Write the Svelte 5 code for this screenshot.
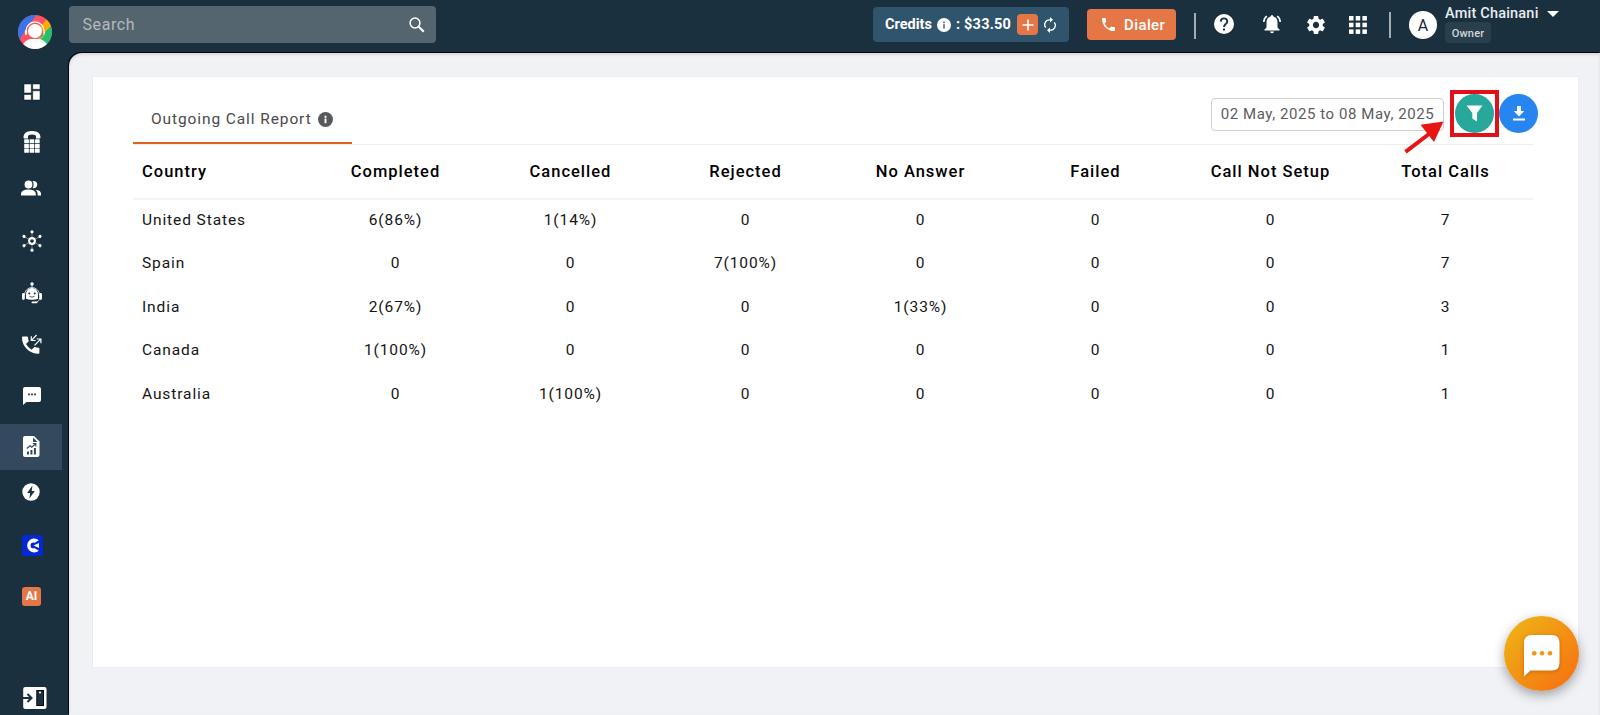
<script>
  const columns = ['Country', 'Completed', 'Cancelled', 'Rejected', 'No Answer', 'Failed', 'Call Not Setup', 'Total Calls'];
  const rows = [
    ['United States', '6(86%)', '1(14%)', '0', '0', '0', '0', '7'],
    ['Spain', '0', '0', '7(100%)', '0', '0', '0', '7'],
    ['India', '2(67%)', '0', '0', '1(33%)', '0', '0', '3'],
    ['Canada', '1(100%)', '0', '0', '0', '0', '0', '1'],
    ['Australia', '0', '1(100%)', '0', '0', '0', '0', '1']
  ];
  const spokes = [0, 60, 120, 180, 240, 300];
  const cells = [0, 1, 2];
</script>

{#snippet info(size, dark)}
  <svg width={size} height={size} viewBox="0 0 16 16">
    <circle cx="8" cy="8" r="8" fill={dark ? '#58595b' : '#fff'} />
    <path d="M7 7h2v5H7zM7 4h2v2H7z" fill={dark ? '#fff' : '#5b7687'} />
  </svg>
{/snippet}

<div class="app">
  <aside>
    <svg class="logo" width="34" height="34" viewBox="0 0 34 34">
      <defs><clipPath id="disc"><circle cx="17" cy="17" r="17" /></clipPath></defs>
      <g clip-path="url(#disc)">
        <rect width="34" height="34" fill="#ff5263" />
        <path d="M0 0H18L1 25H0z" fill="#3b73e8" />
        <path d="M22 12 30 3 34 10 27 19z" fill="#ffaa08" />
        <path d="M34 10V34H23L20 24z" fill="#26bf70" />
        <path d="M5 29.500Q8 24 14 24H20Q26 24 29 29.500L24 34H10z" fill="#fff" />
      </g>
      <circle cx="17" cy="16" r="7" fill="#fff" />
      <path d="M8 19.500V16a9 9 0 0 1 18 0v3.500" fill="none" stroke="#fff" stroke-width="1.300" />
      <path d="M8 15.500v4" stroke="#fff" stroke-width="2.200" />
      <path d="M26 18.500q0 5-6 5" fill="none" stroke="#ffb83a" />
    </svg>

    <nav>
      <span class="item">
        <svg width="18" height="18" viewBox="0 0 18 18"><path d="M1 1h7.300v9H1zM9.700 1H17v5.300H9.700zM1 11.500h7.300V17H1zM9.700 7.800H17V17H9.700z" fill="#fff" stroke="#0b171e" stroke-width=".5" /></svg>
      </span>
      <span class="item">
        <svg width="18" height="22" viewBox="0 0 18 22" fill="#fff">
          <path d="M.5 6.500C.5 2 4 0 9 0s8.500 2 8.500 6.500q0 1-1 1h-3.500V5.500Q13 3.500 9 3.500T5 5.500v2H1.500q-1 0-1-1z" />
          {#each cells as r}{#each cells as c}<rect x={1.2 + c * 5.400} y={8.200 + r * 4.700} width="4.700" height="4.100" rx=".5" />{/each}{/each}
        </svg>
      </span>
      <span class="item">
        <svg width="20" height="16" viewBox="0 0 20 16" fill="#fff">
          <circle cx="7.500" cy="4.500" r="3.900" />
          <path d="M0 15.500v-1.800q0-4 7.500-4.200 7.300.2 7.300 4.200v1.800zM11.600 8.100q2-3.600 0-7.200Q16.200.6 16.300 4.500q-.2 4-4.700 3.600zM14.500 9.800q5.500.6 5.500 4v1.700h-3.400v-1.800q0-2.400-2.100-3.900z" />
        </svg>
      </span>
      <span class="item">
        <svg width="22" height="22" viewBox="-11 -11 22 22">
          <circle r="2.900" fill="none" stroke="#fff" stroke-width="2.200" />
          {#each spokes as angle}
            <g transform={`rotate(${angle})`}><path d="M0-4V-9" stroke="#8b9aa2" stroke-width=".8" /><circle cy="-9.200" r="1.600" fill="#fff" /></g>
          {/each}
        </svg>
      </span>
      <span class="item">
        <svg width="20" height="22" viewBox="0 0 20 22">
          <path d="M10 2v5M2.500 13a7.500 7.500 0 0 1 15 0M17.500 16q0 4-5 4.500" fill="none" stroke="#cbd2d6" stroke-width="1" />
          <circle cx="10" cy="2" r="1.700" fill="#fff" />
          <path d="M4 12.500Q4.500 6 10 6t6 6.500v4.200q-2 1-6 1t-6-1z" fill="#fff" />
          <rect x="0" y="11" width="2.800" height="7" rx="1.400" fill="#fff" /><rect x="17.200" y="11" width="2.800" height="7" rx="1.400" fill="#fff" />
          <rect x="9.500" y="19.600" width="6" height="1.600" rx=".8" fill="#fff" />
          <circle cx="7.300" cy="11.500" r="1" fill="#1a303e" /><circle cx="12.700" cy="11.500" r="1" fill="#1a303e" />
          <path d="M7.500 14.400q2.500 1.500 5 0" fill="none" stroke="#1a303e" stroke-width=".8" />
        </svg>
      </span>
      <span class="item">
        <svg width="20" height="20" viewBox="0 0 20 20">
          <path d="M.8 2.500H5q.9 0 1 1 .1 1.700.6 3.100.2.700-.3 1.200L4 10.100q2 3.700 5.600 5.600l2.300-2.300q.5-.5 1.200-.3 1.500.5 3.300.6 1 .1 1 1v4.100q0 1-1 1Q9.600 19.800 4.800 15 0 10.200 0 3.500q0-1 .8-1z" fill="#fff" />
          <path d="M14.600 1 9.500 6.300M9.300 2.300v4.200h4.300M12.500 11.300l6.200-6.200M14.600 5h4.300v4.300" fill="none" stroke="#fff" stroke-width="1.200" />
        </svg>
      </span>
      <span class="item">
        <svg width="18" height="18" viewBox="0 0 18 18"><path d="M2 0h14q2 0 2 2v11q0 2-2 2H3.500L0 18V2q0-2 2-2z" fill="#fff" /><path d="M5 6.500h2v1.800H5zM8 6.500h2v1.800H8zM11 6.500h2v1.800h-2z" fill="#3b4f5a" /></svg>
      </span>
      <span class="item active">
        <svg width="17" height="21" viewBox="0 0 17 21">
          <path d="M2 0h9l5.500 5.500V19q0 2-2 2H2q-2 0-2-2V2Q0 0 2 0z" fill="#fff" />
          <path d="M10 1.500V6h4.500z" fill="#34495e" />
          <path d="M4 15.500h2V18.500H4zM7.400 14h2v4.500H7.400zM10.900 12h2v6.500h-2z" fill="#34495e" />
          <path d="M3.800 12.500 7 9.700l1.700 1.600 3.900-3.600M9.800 7.500h3v3" fill="none" stroke="#34495e" stroke-width="1.200" />
        </svg>
      </span>
      <span class="item">
        <svg width="18" height="18" viewBox="0 0 18 18"><circle cx="9" cy="9" r="8.700" fill="#fff" /><path d="M10.400 2.500 5.200 10h3l-.8 5.500L12.800 8H9.700z" fill="#1a303e" /></svg>
      </span>
      <span class="item">
        <svg width="21" height="21" viewBox="0 0 21 21"><rect width="21" height="21" rx="2" fill="#0527d4" /><path d="M16.800 5.300A7 7 0 1 0 16.800 15.700L12.800 13.200Q8.500 14 8.500 10.500T12.800 7.700z" fill="#fff" /><path d="m11.500 10.500 5.500-2.400v4.800z" fill="#fff" /></svg>
      </span>
      <span class="item"><b class="ai">AI</b></span>
    </nav>

    <svg class="exit" width="24" height="22" viewBox="0 0 24 22">
      <rect x=".2" width="23.300" height="22" rx="2" fill="#fff" />
      <path d="M0 11h7M4.500 7 8.500 11l-4 4" fill="none" stroke="#1a303e" stroke-width="2" />
      <rect x="13.800" y="3.500" width="6.700" height="15" fill="#1a303e" stroke="#06090b" /><circle cx="17" cy="5.500" r="1.100" fill="#fff" />
    </svg>
  </aside>

  <div class="main">
    <header>
      <div class="search">
        <span>Search</span>
        <svg width="16" height="16" viewBox="0 0 16 16" fill="none" stroke="#fff"><circle cx="6" cy="6" r="4.900" stroke-width="1.500" /><path d="m9.500 9.500 5.300 5.300" stroke-width="2" /></svg>
      </div>
      <div class="credits">
        <span class="word">Credits</span>
        {@render info(14, false)}
        <span class="amount">: $33.50</span>
        <span class="plus"><svg width="12" height="12" viewBox="0 0 12 12"><path d="M6 .5v11M.5 6h11" stroke="#fff" stroke-width="1.600" /></svg></span>
        <svg class="refresh" width="14" height="16" viewBox="0 0 14 16"><path d="M8 2.800H6.500A4.900 4.900 0 0 0 2.700 10.700M6 13.200h1.500a4.900 4.900 0 0 0 3.800-7.900" fill="none" stroke="#fff" stroke-width="1.300" /><path d="m7 0 3 2.800L7 5.500zM7 10.500l-3 2.700L7 16z" fill="#fff" /></svg>
      </div>
      <div class="dialer">
        <svg width="13" height="13" viewBox="0 0 18 18"><path d="M1 0h3.200q1 0 1 1 0 1.900.6 3.600.2.600-.3 1.100L3.600 7.800q2.200 4.400 6.600 6.600l2.200-2.200q.4-.4 1-.2 1.700.6 3.600.6 1 0 1 1V17q0 1-1 1Q10 18 5 13T0 1q0-1 1-1z" fill="#fff" /></svg>
        <span>Dialer</span>
      </div>
      <i class="bar first"></i>
      <svg class="help" width="20" height="20" viewBox="0 0 20 20"><circle cx="10" cy="10" r="10" fill="#fff" /><path d="M6.800 7.600Q6.900 4.400 10 4.400t3.200 3q0 1.500-1.500 2.700Q10 11.300 10 13" fill="none" stroke="#1a303e" stroke-width="1.900" /><rect x="9" y="14.500" width="2" height="2" fill="#1a303e" /></svg>
      <svg class="bell" width="20" height="20" viewBox="0 0 20 20"><path d="M10 1q1.300 0 1.300 1.600Q15.500 3.800 15.500 8.500v5l2 2v1H2.500v-1l2-2v-5q0-4.700 4.200-5.900Q8.700 1 10 1zM8 17.400h4q-.2 1.800-2 1.800t-2-1.800z" fill="#fff" /><path d="M1.800 8q0-3.500 3-5.800M18.200 8q0-3.500-3-5.800" fill="none" stroke="#fff" stroke-width="1.500" /></svg>
      <svg class="gear" width="18" height="18" viewBox="2 2 20 20"><path fill="#fff" d="M19.430 12.980c.04-.32.070-.64.070-.98s-.03-.66-.070-.98l2.110-1.650c.19-.15.240-.42.120-.64l-2-3.460c-.12-.22-.39-.3-.61-.22l-2.490 1c-.52-.4-1.080-.73-1.690-.98l-.38-2.650C14.460 2.180 14.250 2 14 2h-4c-.25 0-.46.180-.49.420l-.38 2.650c-.61.250-1.170.590-1.690.980l-2.490-1c-.23-.09-.49 0-.61.220l-2 3.460c-.13.220-.07.490.12.640l2.110 1.650c-.04.320-.07.650-.07.980s.03.660.07.980l-2.110 1.650c-.19.150-.24.420-.12.640l2 3.460c.12.220.39.300.61.220l2.490-1c.52.400 1.080.730 1.690.980l.38 2.650c.03.240.24.420.49.420h4c.25 0 .46-.18.490-.42l.38-2.650c.61-.25 1.170-.59 1.690-.98l2.490 1c.23.090.49 0 .61-.22l2-3.460c.12-.22.070-.49-.12-.64l-2.110-1.650zM12 15.500c-1.930 0-3.500-1.570-3.500-3.500s1.570-3.500 3.500-3.500 3.500 1.570 3.500 3.500-1.570 3.500-3.500 3.500z" /></svg>
      <svg class="grid" width="18" height="18" viewBox="0 0 18 18" fill="#fff">{#each cells as r}{#each cells as c}<rect x={c * 6.700} y={r * 6.700} width="4.500" height="4.500" />{/each}{/each}</svg>
      <i class="bar second"></i>
      <span class="avatar">A</span>
      <div class="user">
        <div class="name"><span>Amit Chainani</span><svg width="12" height="6" viewBox="0 0 12 6"><path d="M0 0h12L6 6z" fill="#fff" /></svg></div>
        <span class="role">Owner</span>
      </div>
    </header>

    <main>
      <section class="card">
        <div class="toolbar">
          <div class="tab"><span>Outgoing Call Report</span>{@render info(15, true)}</div>
          <div class="tools">
            <span class="dates">02 May, 2025 to 08 May, 2025</span>
            <span class="round green">
              <svg width="17" height="17" viewBox="0 0 17 17"><path d="M.5.500h16L11 8v7.500q0 1-.8.600L6.300 13.500V8z" fill="#fff" /></svg>
              <i class="frame"></i>
              <svg class="arrow" width="42" height="34" viewBox="0 0 42 34"><path d="M2.500 30.800 26 13" stroke="#e81515" stroke-width="4" /><path d="M40.500.5 31 21 17.500 3.700z" fill="#e81515" /></svg>
            </span>
            <span class="round blue"><svg width="12" height="15" viewBox="0 0 12 15" fill="#fff"><path d="M4 0h4v5h3.300L6 10.500.7 5H4zM0 12.600h12v1.900H0z" /></svg></span>
          </div>
        </div>
        <div class="table">
          <div class="row head">{#each columns as c}<span>{c}</span>{/each}</div>
          {#each rows as row}
            <div class="row">{#each row as cell}<span>{cell}</span>{/each}</div>
          {/each}
        </div>
      </section>
    </main>
  </div>

  <div class="chat">
    <svg width="36" height="42" viewBox="0 0 36 42"><path d="M8 0h20q7.500 0 7.500 7.500v20q0 8-7.500 8H6.500L0 41.500V8Q0 0 8 0z" fill="#fff" /><g fill="#f4940f"><circle cx="10.200" cy="18.300" r="2.300" /><circle cx="18" cy="18.300" r="2.300" /><circle cx="26" cy="18.300" r="2.300" /></g></svg>
  </div>
</div>

<style>
  :global(body) { margin: 0; background: #1a303e; }
  * { box-sizing: border-box; }
  svg { display: block; flex: none; }
  .app { display: flex; height: 715px; width: 1600px; overflow: hidden; background: #1a303e; font-family: Roboto, sans-serif; position: relative; }
  aside { width: 69px; flex: none; display: flex; flex-direction: column; }
  .logo { margin: 14.700px 0 0 17.700px; }
  nav { display: flex; flex-direction: column; width: 62px; margin-top: 21px; }
  .item { height: 44px; flex: none; display: flex; align-items: center; justify-content: center; padding-left: 1px; }
  .item:nth-child(2) { margin-top: 6px; }
  .item:nth-child(3) { margin-top: 2px; padding-left: 0; }
  .item:nth-child(4) { margin-top: 9px; padding-left: 2px; }
  .item:nth-child(5) { margin-top: 8px; padding-left: 2px; }
  .item:nth-child(6) { margin-top: 7px; padding-left: 2px; }
  .item:nth-child(7) { margin-top: 8px; padding-left: 2px; }
  .item.active { margin-top: 6px; height: 46px; background: #34495e; padding: 0 0 1px; }
  .item:nth-child(9) { padding-left: 0; }
  .item:nth-child(10) { margin-top: 10px; padding-left: 3px; }
  .item:nth-child(11) { margin-top: 7px; }
  .ai { width: 19px; height: 19px; border-radius: 3px; background: #e57747; color: #fff; font-size: 12px; font-weight: 700; line-height: 19px; text-align: center; }
  .exit { margin: auto 0 6px 23px; }

  .main { flex: 1; display: flex; flex-direction: column; min-width: 0; }
  header { height: 53px; display: flex; align-items: flex-start; color: #fff; }
  .search { width: 367px; height: 37px; margin-top: 5.700px; padding: 0 11px 0 13.500px; border-radius: 4px; background: #55656f; display: flex; align-items: center; justify-content: space-between; font-size: 16px; letter-spacing: .6px; color: #b4b9bd; }
  .search svg { margin-top: 1px; }
  .credits { margin: 7px 0 0 437px; width: 196px; height: 35px; border-radius: 4px; background: #2f546b; display: flex; align-items: center; padding-left: 12px; font-size: 14.500px; font-weight: 700; }
  .word { width: 52px; white-space: nowrap; }
  .amount { width: 62px; margin-left: 5px; white-space: nowrap; letter-spacing: .2px; }
  .plus { width: 21px; height: 21px; margin-left: -1px; border-radius: 4px; background: #e57747; display: grid; place-items: center; }
  .refresh { margin-left: 5px; }
  .dialer { margin: 9px 0 0 18px; width: 89px; height: 31px; border-radius: 4px; background: #e57747; display: flex; align-items: center; gap: 9px; padding-left: 15px; font-size: 15px; font-weight: 500; letter-spacing: .4px; }
  .bar { width: 2px; height: 26px; background: #a5adb2; }
  .bar.first { margin: 13px 0 0 18px; }
  .bar.second { margin: 12px 0 0 22px; }
  .help { margin: 14px 0 0 18px; }
  .bell { margin: 14px 0 0 28px; }
  .gear { margin: 15.500px 0 0 25px; }
  .grid { margin: 16px 0 0 24px; }
  .avatar { margin: 10.500px 0 0 18px; width: 28px; height: 28px; border-radius: 50%; background: #fff; color: #1c2733; text-align: center; font-size: 16px; line-height: 29px; }
  .user { margin: 5px 0 0 8px; }
  .name { display: flex; align-items: center; gap: 8px; height: 17px; font-size: 14.500px; letter-spacing: .2px; font-weight: 500; color: #e9ecee; white-space: nowrap; }
  .role { display: block; width: 46px; height: 21px; border-radius: 4px; background: #293f4c; text-align: center; font-size: 11px; font-weight: 500; line-height: 23px; letter-spacing: .2px; color: #d3d8db; }

  main { flex: 1; background: #f0f2f6; border-radius: 13px 0 0 0; padding: 23px 21px 47px 23px; display: flex; box-shadow: -1px -1px 0 #02050f, inset 0 2px 3px rgba(0, 0, 0, .1); }
  .card { flex: 1; background: #fff; border: 1px solid #ebedf0; padding: 0 45px 0 40px; }
  .toolbar { display: flex; justify-content: space-between; height: 68px; border-bottom: 1px solid #ececee; }
  .tab { width: 219px; height: 67px; border-bottom: 2px solid #e0621c; display: flex; align-items: center; gap: 6px; padding: 18px 0 0 18px; font-size: 15.500px; letter-spacing: .9px; color: #4a4a4a; white-space: nowrap; }
  .tab svg { margin-top: 1px; }
  .tools { display: flex; margin: 17px -5px 0 0; }
  .dates { width: 233px; height: 33px; margin: 4px 11px 0 0; border: 1px solid #d0d0d0; border-radius: 4px; line-height: 31px; text-align: center; font-size: 15px; letter-spacing: .56px; color: #5c5c5c; white-space: nowrap; }
  .round { position: relative; width: 39px; height: 39px; border-radius: 50%; display: grid; place-items: center; }
  .green { background: #28a79b; margin-right: 5px; }
  .blue { background: #2685ee; }
  .frame { position: absolute; left: -5px; top: -4px; width: 49px; height: 47px; border: 4px solid #e21018; }
  .arrow { position: absolute; left: -52px; top: 27px; }
  .row { display: grid; grid-template-columns: repeat(8, 1fr); height: 43.500px; align-items: center; text-align: center; font-size: 15.500px; letter-spacing: .9px; color: #151515; }
  .row span:first-child { text-align: left; padding-left: 9px; }
  .head { height: 55px; margin-bottom: -2px; padding-bottom: 1px; border-bottom: 2px solid #f4f4f5; font-size: 16.500px; font-weight: 500; letter-spacing: 1px; color: #000; }

  .chat { position: absolute; left: 1504px; top: 616px; width: 75px; height: 75px; border-radius: 50%; background: linear-gradient(135deg, #efb016 10%, #f57811 85%); box-shadow: 0 4px 12px rgba(0, 0, 0, .35); display: grid; place-items: center; padding-top: 5px; }
  .chat svg { filter: drop-shadow(0 1px 2px rgba(120, 60, 0, .4)); }
</style>
